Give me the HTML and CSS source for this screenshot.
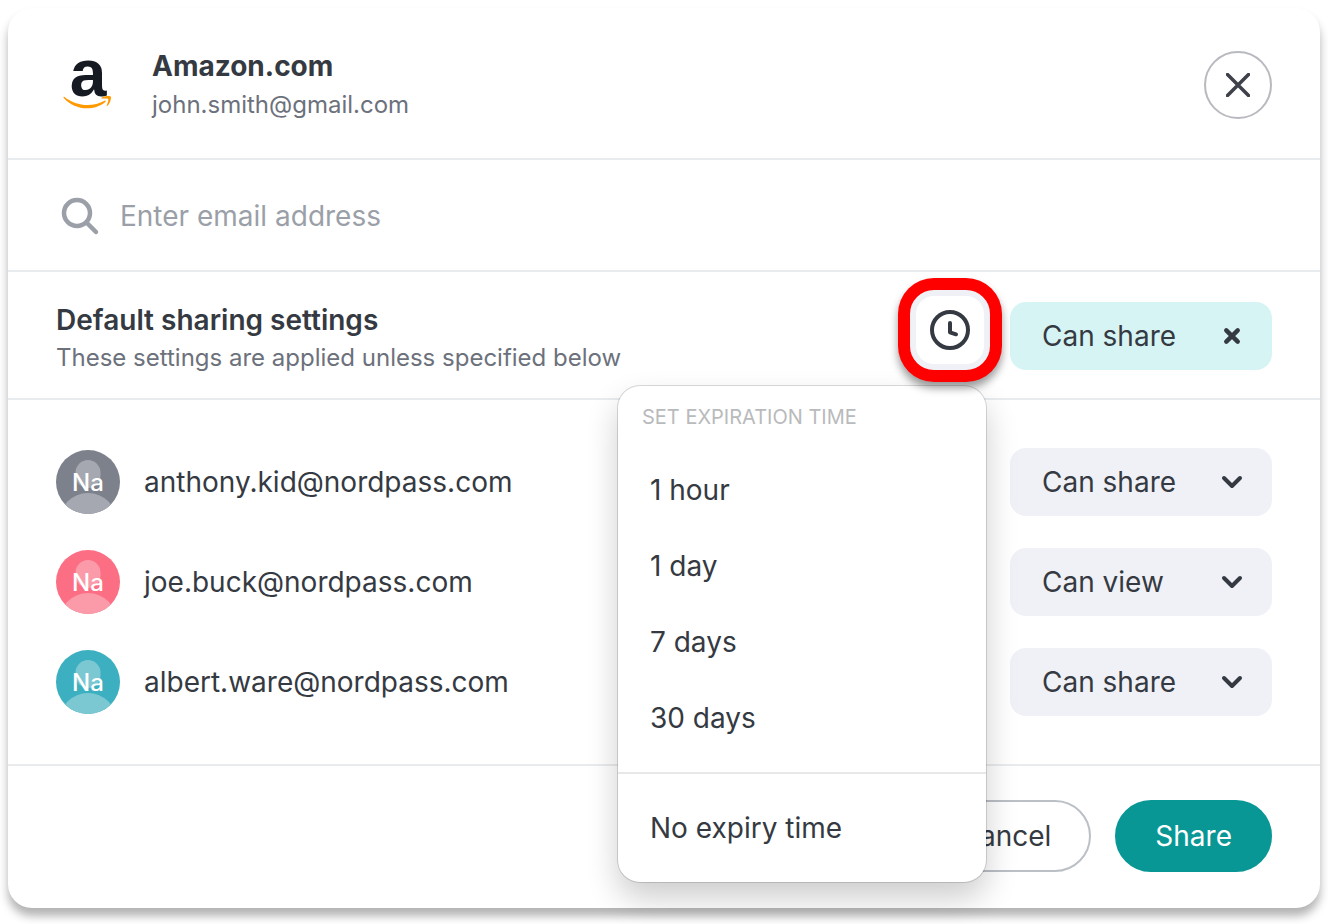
FILE: index.html
```html
<!DOCTYPE html>
<html lang="en">
<head>
  <meta charset="UTF-8">
  <meta name="viewport" content="width=device-width, initial-scale=1.0">
  <title>Share item</title>
  <link rel="stylesheet" href="styles.css">
</head>
<body>
  <main class="modal">
    <!-- Header -->
    <header class="modal-header">
      <svg class="logo" viewBox="0 0 64 64" role="img" aria-label="Amazon">
        <text class="logo-letter" x="32" y="43" text-anchor="middle">a</text>
        <path fill="#ff9900" d="M8.200 43.700c6.800 5.400 15 8.300 23.200 8.300 6.300 0 12-1.500 17.200-4.300.9-.5 1.700.5.800 1.200-5 4.100-11.800 6.300-18.200 6.300-9 0-17.300-3.500-23.400-10.300-.6-.7-.2-1.500.4-1.200z"/>
        <path fill="#ff9900" d="M45.500 44.700c2.400-1.800 8.300-2.200 9.200-1.200.8 1-.3 6.900-3.300 9.300-.5.400-1 .2-.7-.4.800-1.900 2.100-5.500 1.500-6.400-.6-.8-4.200-.6-6.200-.5-.7 0-.9-.5-.5-.8z"/>
      </svg>
      <div class="item-info">
        <h1>Amazon.com</h1>
        <p>john.smith@gmail.com</p>
      </div>
      <button type="button" class="close-btn" aria-label="Close">
        <svg viewBox="0 0 24 24" width="24" height="24"><path d="M1.500 1.500l21 21M22.500 1.500l-21 21"/></svg>
      </button>
    </header>

    <!-- Email search -->
    <div class="search">
      <label for="email">
        <svg viewBox="0 0 48 48" width="48" height="48" role="img" aria-label="Email address"><circle cx="21" cy="21" r="13"/><path d="M30.500 30.500l9.500 9.500"/></svg>
      </label>
      <input type="email" id="email" name="email" placeholder="Enter email address">
    </div>

    <!-- Default sharing settings -->
    <section class="settings">
      <div class="settings-text">
        <h2>Default sharing settings</h2>
        <p>These settings are applied unless specified below</p>
      </div>
      <div class="settings-controls">
        <div class="expiration">
          <button type="button" class="clock-btn" aria-label="Set expiration time" aria-haspopup="menu" aria-expanded="true">
            <svg viewBox="0 0 40 40" width="40" height="40"><circle cx="20" cy="20" r="18"/><path d="M20 13v9.300l6 2"/></svg>
          </button>
          <div class="menu" role="menu">
            <h3>SET EXPIRATION TIME</h3>
            <div class="menu-group">
              <button type="button" role="menuitem">1 hour</button>
              <button type="button" role="menuitem">1 day</button>
              <button type="button" role="menuitem">7 days</button>
              <button type="button" role="menuitem">30 days</button>
            </div>
            <div class="menu-group last">
              <button type="button" role="menuitem">No expiry time</button>
            </div>
          </div>
        </div>
        <button type="button" class="permission-chip">
          Can share
          <svg viewBox="0 0 24 24" width="24" height="24"><path d="M6.300 6.300l11.400 11.400M17.700 6.300L6.300 17.700"/></svg>
        </button>
      </div>
    </section>

    <!-- People -->
    <ul class="people">
      <li>
        <span class="avatar gray">
          <svg viewBox="0 0 64 64"><rect x="19.500" y="10" width="25" height="28" rx="12.500"/><circle cx="32" cy="72" r="29"/></svg>
          <span>Na</span>
        </span>
        <label for="person-1">anthony.kid@nordpass.com</label>
        <div class="permission">
          <select id="person-1">
            <option selected>Can share</option>
            <option>Can view</option>
          </select>
          <svg viewBox="0 0 24 24" width="24" height="24"><path d="M4 8l8 8 8-8"/></svg>
        </div>
      </li>
      <li>
        <span class="avatar pink">
          <svg viewBox="0 0 64 64"><rect x="19.500" y="10" width="25" height="28" rx="12.500"/><circle cx="32" cy="72" r="29"/></svg>
          <span>Na</span>
        </span>
        <label for="person-2">joe.buck@nordpass.com</label>
        <div class="permission">
          <select id="person-2">
            <option>Can share</option>
            <option selected>Can view</option>
          </select>
          <svg viewBox="0 0 24 24" width="24" height="24"><path d="M4 8l8 8 8-8"/></svg>
        </div>
      </li>
      <li>
        <span class="avatar teal">
          <svg viewBox="0 0 64 64"><rect x="19.500" y="10" width="25" height="28" rx="12.500"/><circle cx="32" cy="72" r="29"/></svg>
          <span>Na</span>
        </span>
        <label for="person-3">albert.ware@nordpass.com</label>
        <div class="permission">
          <select id="person-3">
            <option selected>Can share</option>
            <option>Can view</option>
          </select>
          <svg viewBox="0 0 24 24" width="24" height="24"><path d="M4 8l8 8 8-8"/></svg>
        </div>
      </li>
    </ul>

    <!-- Footer -->
    <footer class="modal-footer">
      <button type="button" class="btn">Cancel</button>
      <button type="button" class="btn primary">Share</button>
    </footer>
  </main>
</body>
</html>
```
FILE: styles.css
```css
* {
  box-sizing: border-box;
}

body {
  margin: 0;
  padding: 8px 8px 16px;
  background-color: #fff;
  color: #353a42;
  font-family: Inter, sans-serif;
  font-size: 28px;
}

h1, h2, h3, p, ul {
  margin: 0;
  padding: 0;
}

button, input, select {
  font: inherit;
  color: inherit;
}

button, select {
  cursor: pointer;
}

svg {
  display: block;
  flex-shrink: 0;
  fill: none;
  stroke-linecap: round;
  stroke-linejoin: round;
}

.modal {
  background-color: #fff;
  border-radius: 24px;
  box-shadow: 0 8px 10px rgba(0, 0, 0, 0.3);
}

/* Header */
.modal-header {
  display: flex;
  align-items: center;
  gap: 32px;
  padding: 38px 48px 34px;
  border-bottom: 2px solid #e9ecef;
}

.logo {
  width: 64px;
  height: 64px;
  overflow: visible;
}

.logo-letter {
  fill: #161a23;
  font-family: "Liberation Sans", sans-serif;
  font-size: 66px;
  font-weight: 700;
}

.item-info {
  flex: 1;
}

.item-info h1 {
  font-size: 28px;
  font-weight: 700;
  line-height: 40px;
}

.item-info p {
  color: #6c717c;
  font-size: 24px;
  line-height: 38px;
}

.close-btn {
  display: flex;
  align-items: center;
  justify-content: center;
  width: 68px;
  height: 68px;
  padding: 0;
  background: none;
  border: 2px solid #b8babf;
  border-radius: 50%;
}

.close-btn svg {
  stroke: #3e4149;
  stroke-width: 3.5;
}

/* Search */
.search {
  display: flex;
  align-items: center;
  gap: 16px;
  padding: 32px 48px 30px;
  border-bottom: 2px solid #e9ecef;
}

.search svg {
  stroke: #9b9fa8;
  stroke-width: 4.5;
}

.search input {
  flex: 1;
  min-width: 0;
  padding: 0;
  border: none;
  outline: none;
  line-height: 40px;
}

.search input::placeholder {
  color: #9b9fa8;
}

/* Default sharing settings */
.settings {
  display: flex;
  align-items: flex-end;
  justify-content: space-between;
  padding: 18px 48px 22px;
  border-bottom: 2px solid #e9ecef;
}

.settings-text h2 {
  font-size: 28px;
  font-weight: 600;
  line-height: 40px;
}

.settings-text p {
  color: #6c717c;
  font-size: 24px;
  line-height: 36px;
}

.settings-controls {
  display: flex;
  align-items: flex-end;
  gap: 20px;
  margin-bottom: 6px;
}

.expiration {
  position: relative;
}

.clock-btn {
  position: relative;
  z-index: 2;
  display: flex;
  align-items: center;
  justify-content: center;
  width: 80px;
  height: 80px;
  padding: 0;
  background-color: #fff;
  border: 6px solid #f0f1f6;
  border-radius: 24px;
  box-shadow: 0 0 0 12px #ff0000, 0 6px 8px 12px rgba(0, 0, 0, 0.4);
}

.clock-btn svg {
  stroke: #353a42;
  stroke-width: 4;
}

.permission-chip {
  display: flex;
  align-items: center;
  justify-content: space-between;
  width: 262px;
  height: 68px;
  padding: 0 28px 0 32px;
  background-color: #d7f4f4;
  border: none;
  border-radius: 16px;
}

.permission-chip svg {
  stroke: #353a42;
  stroke-width: 4.5;
}

/* Expiration menu */
.menu {
  position: absolute;
  top: 96px;
  right: 4px;
  z-index: 1;
  width: 368px;
  background-color: #fff;
  border-radius: 22px;
  box-shadow: 0 0 0 1px rgba(0, 0, 0, 0.14), 0 16px 32px rgba(0, 0, 0, 0.2);
}

.menu h3 {
  padding: 0 24px;
  color: #b9babc;
  font-size: 20px;
  font-weight: 400;
  line-height: 62px;
}

.menu-group {
  padding: 4px 0 16px;
}

.menu-group.last {
  padding-top: 16px;
  border-top: 2px solid #e8e8e8;
}

.menu button {
  display: block;
  width: 100%;
  height: 76px;
  padding: 0 32px;
  background: none;
  border: none;
  text-align: left;
}

/* People */
.people {
  display: flex;
  flex-direction: column;
  gap: 32px;
  padding: 48px;
  border-bottom: 2px solid #e9ecef;
  list-style: none;
}

.people li {
  display: flex;
  align-items: center;
  gap: 24px;
}

.people label {
  flex: 1;
}

.avatar {
  display: grid;
  place-items: center;
  width: 64px;
  height: 64px;
  border-radius: 50%;
  overflow: hidden;
  color: #fff;
  font-size: 24px;
  font-weight: 500;
}

.avatar svg,
.avatar span {
  grid-area: 1 / 1;
}

.avatar span {
  z-index: 1;
}

.avatar svg {
  width: 64px;
  height: 64px;
}

.avatar.gray {
  background-color: #7d818b;
}

.avatar.gray svg {
  fill: #a5a8b0;
}

.avatar.pink {
  background-color: #fb6e83;
}

.avatar.pink svg {
  fill: #fb9aa8;
}

.avatar.teal {
  background-color: #3cafc0;
}

.avatar.teal svg {
  fill: #7bc8d3;
}

.permission {
  display: grid;
  align-items: center;
  width: 262px;
}

.permission select,
.permission svg {
  grid-area: 1 / 1;
}

.permission select {
  appearance: none;
  width: 100%;
  height: 68px;
  padding: 0 64px 0 32px;
  background-color: #f0f1f6;
  border: none;
  border-radius: 16px;
}

.permission svg {
  justify-self: end;
  margin-right: 28px;
  pointer-events: none;
  stroke: #353a42;
  stroke-width: 4;
}

/* Footer */
.modal-footer {
  display: flex;
  justify-content: flex-end;
  gap: 24px;
  padding: 34px 48px 36px;
}

.btn {
  height: 72px;
  padding: 0 38px;
  background-color: #fff;
  border: 2px solid #bbbfc6;
  border-radius: 36px;
}

.btn.primary {
  background-color: #089795;
  border-color: #089795;
  color: #fff;
}
```
